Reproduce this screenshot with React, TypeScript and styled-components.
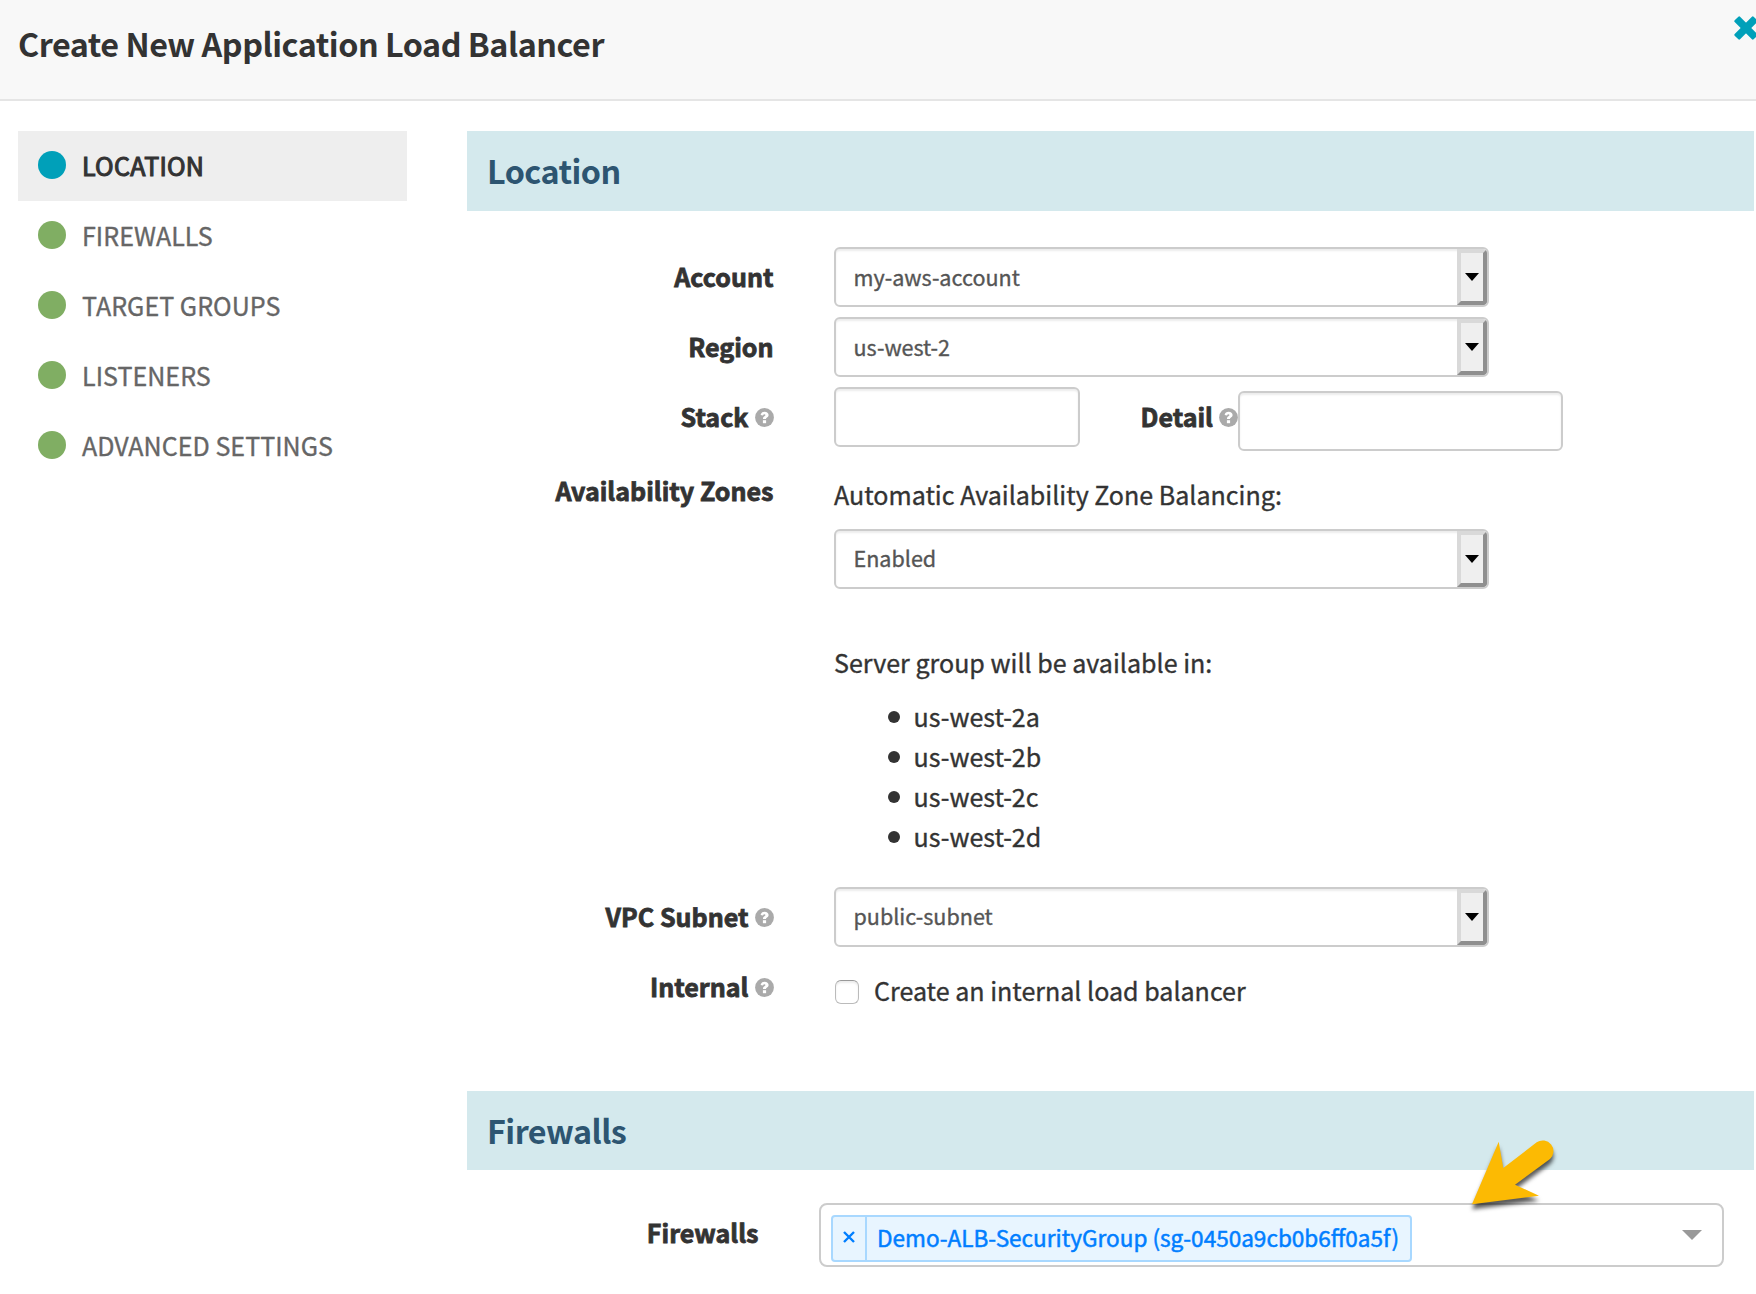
import React from 'react';
import styled, { createGlobalStyle } from 'styled-components';

const GlobalStyle = createGlobalStyle`
  * { box-sizing: border-box; }
  body {
    margin: 0;
    background: #fff;
    color: #333;
    font-family: "Noto Sans CJK SC", "Open Sans", sans-serif;
    font-size: 25.05px;
    -webkit-text-stroke: 0.35px currentColor;
    overflow: hidden;
  }
`;

const Modal = styled.div`
  width: 1756px;
  height: 1294px;
  overflow: hidden;
`;

const Header = styled.header`
  display: flex;
  justify-content: space-between;
  height: 101px;
  padding-left: 18px;
  background: #f8f8f8;
  border-bottom: 2px solid #e5e5e5;
`;

const Title = styled.h1`
  margin: 0;
  padding-top: 20px;
  font-size: 32.3px;
  font-weight: 600;
  letter-spacing: -0.47px;
  line-height: 46px;
  white-space: nowrap;
  -webkit-text-stroke: 0;
`;

const CloseIcon = styled.svg`
  flex: none;
  width: 24px;
  height: 24px;
  margin: 16px -2px 0 0;
  fill: #00a0b9;
`;

const Body = styled.div`
  display: flex;
  padding: 30px 2px 0 18px;
`;

const Nav = styled.nav`
  flex: none;
  width: 389px;
  margin-right: 60px;
`;

const NavItem = styled.div<{ $active?: boolean }>`
  display: flex;
  align-items: center;
  height: 70px;
  padding: 0 0 2px 20px;
  gap: 16px;
  background: ${(p) => (p.$active ? '#eee' : 'transparent')};
  color: ${(p) => (p.$active ? '#333' : '#666')};
  letter-spacing: ${(p) => (p.$active ? 0.25 : 0.03)}px;
  white-space: nowrap;
  -webkit-text-stroke-width: ${(p) => (p.$active ? 1.1 : 0.35)}px;
`;

const Dot = styled.span<{ $active?: boolean }>`
  width: 28px;
  height: 28px;
  border-radius: 50%;
  background: ${(p) => (p.$active ? '#00a0b9' : '#80ae63')};
`;

const Main = styled.main`
  flex: 1;
`;

const SectionHeading = styled.h2<{ $height: number }>`
  height: ${(p) => p.$height}px;
  margin: 0;
  padding-left: 20px;
  background: #d4e9ed;
  color: #2d5571;
  font-size: 32.3px;
  font-weight: 600;
  letter-spacing: -0.52px;
  line-height: 79px;
  -webkit-text-stroke: 0;
`;

const LocationForm = styled.div`
  height: 880px;
  padding-top: 36px;
`;

const Row = styled.div<{ $height?: number }>`
  display: flex;
  height: ${(p) => p.$height ?? 70}px;
`;

const Label = styled.label<{ $width?: number; $gap?: number }>`
  display: flex;
  flex: none;
  align-items: center;
  justify-content: flex-end;
  gap: 6px;
  width: ${(p) => p.$width ?? 306.5}px;
  height: 58px;
  margin-right: ${(p) => p.$gap ?? 60.5}px;
  font-weight: 700;
  white-space: nowrap;
  -webkit-text-stroke-width: 0.8px;
`;

const Field = styled.div`
  flex: 1;
`;

const HelpSvg = styled.svg`
  flex: none;
  width: 19px;
  height: 19px;
  margin-top: 2px;
`;

const SelectBox = styled.div<{ $lineHeight: number }>`
  display: flex;
  justify-content: space-between;
  width: 655px;
  height: 60px;
  padding-left: 17.5px;
  overflow: hidden;
  border: 2px solid #ccc;
  border-radius: 6px;
  box-shadow: inset 0 2px 2px rgba(0, 0, 0, 0.075);
  color: #555;
  font-size: 21.55px;
  line-height: ${(p) => p.$lineHeight}px;
`;

const SelectButton = styled.span`
  display: flex;
  align-items: center;
  justify-content: center;
  width: 30px;
  height: 56px;
  padding-bottom: 1px;
  background: #efefef;
  border: 4px solid;
  border-color: #d9d9d9 #8f8f8f #8f8f8f #d9d9d9;
  border-radius: 0 4px 4px 0;
`;

const TextInput = styled.input<{ $width: number; $top?: number }>`
  width: ${(p) => p.$width}px;
  height: 60px;
  margin: ${(p) => p.$top ?? 0}px 0 0;
  padding: 0 18px;
  border: 2px solid #ccc;
  border-radius: 6px;
  box-shadow: inset 0 2px 2px rgba(0, 0, 0, 0.075);
  outline: none;
`;

const Note = styled.p<{ $top: number }>`
  margin: 0;
  padding-top: ${(p) => p.$top}px;
  line-height: 40px;
`;

const ZoneSelect = styled.div`
  padding: 15px 0 53px;
`;

const ZoneList = styled.ul`
  margin: 14px 0 0;
  padding: 0 0 0 54px;
  list-style: none;
`;

const Zone = styled.li`
  display: flex;
  align-items: center;
  gap: 13.5px;
  height: 40px;
  line-height: 40px;

  &::before {
    content: '';
    width: 12px;
    height: 12px;
    margin-top: 2px;
    border-radius: 50%;
    background: #333;
  }
`;

const CheckLabel = styled.label`
  display: flex;
  align-items: center;
  height: 66px;
  gap: 15px;
`;

const Checkbox = styled.input`
  appearance: none;
  width: 24px;
  height: 24px;
  margin: 3px 0 0 1px;
  border: 1.5px solid #bbb;
  border-top-color: #999;
  border-radius: 6px;
  background: #fff;
  box-shadow: inset 0 2px 2px rgba(0, 0, 0, 0.08);
`;

const FirewallForm = styled.div`
  position: relative;
  display: flex;
  padding-top: 33px;
`;

const MultiSelect = styled.div`
  display: flex;
  justify-content: space-between;
  width: 905px;
  height: 64px;
  padding: 10px 20px 0 10px;
  border: 2px solid #ccc;
  border-radius: 8px;
`;

const Tag = styled.span`
  display: flex;
  height: 47px;
  background: #e8f5ff;
  border: 2px solid #a8d8ff;
  border-radius: 4px;
  color: #007eff;
  white-space: nowrap;
`;

const TagRemove = styled.span`
  display: flex;
  align-items: center;
  justify-content: center;
  width: 34px;
  padding-bottom: 3px;
  border-right: 2px solid #a8d8ff;
`;

const TagText = styled.span`
  padding: 0 11px 0 10px;
  font-size: 22.55px;
  line-height: 41px;
  -webkit-text-stroke-width: 0.5px;
`;

const Caret = styled.span`
  width: 20px;
  height: 10px;
  margin-top: 15px;
  background: #999;
  clip-path: polygon(0 0, 100% 0, 50% 100%);
`;

const Pointer = styled.svg`
  position: absolute;
  top: -36px;
  left: 995px;
  width: 100px;
  height: 90px;
  overflow: visible;
  filter: drop-shadow(0 5px 2px rgba(0, 0, 0, 0.65));
`;

const steps = ['Location', 'Firewalls', 'Target Groups', 'Listeners', 'Advanced Settings'];
const zones = ['us-west-2a', 'us-west-2b', 'us-west-2c', 'us-west-2d'];

function Help() {
  return (
    <HelpSvg viewBox="0 0 19 19">
      <circle cx="9.5" cy="9.5" r="9.4" fill="#aaa" />
      <path d="M5.6 7.1C6 4.9 7.5 3.8 9.6 3.8c2.3 0 4 1.3 4 3.2 0 2.4-2.6 2.5-2.6 4H8c0-2.6 2.4-2.7 2.4-3.9 0-.6-.4-.9-1-.9-.7 0-1.1.4-1.4 1.2z" fill="#fff" />
      <rect x="7.9" y="12.2" width="3.2" height="3" fill="#fff" />
    </HelpSvg>
  );
}

function Select({ value, lineHeight = 56 }: { value: string; lineHeight?: number }) {
  return (
    <SelectBox $lineHeight={lineHeight}>
      {value}
      <SelectButton>
        <svg width="14" height="8" viewBox="0 0 14 8">
          <path d="M0 0h14L7 8z" />
        </svg>
      </SelectButton>
    </SelectBox>
  );
}

export default function App() {
  return (
    <Modal>
      <GlobalStyle />
      <Header>
        <Title>Create New Application Load Balancer</Title>
        <CloseIcon viewBox="0 0 24 24">
          <g transform="rotate(45 12 12)">
            <rect x="-1.4" y="8.2" width="26.8" height="7.6" rx="1.2" />
            <rect x="8.2" y="-1.4" width="7.6" height="26.8" rx="1.2" />
          </g>
        </CloseIcon>
      </Header>
      <Body>
        <Nav>
          {steps.map((step, i) => (
            <NavItem key={step} $active={i === 0}>
              <Dot $active={i === 0} />
              {step.toUpperCase()}
            </NavItem>
          ))}
        </Nav>
        <Main>
          <SectionHeading $height={80}>Location</SectionHeading>
          <LocationForm>
            <Row>
              <Label>Account</Label>
              <Select value="my-aws-account" />
            </Row>
            <Row>
              <Label>Region</Label>
              <Select value="us-west-2" />
            </Row>
            <Row>
              <Label>Stack <Help /></Label>
              <TextInput $width={246} />
              <Label $width={158} $gap={0}>Detail <Help /></Label>
              <TextInput $width={325} $top={4} />
            </Row>
            <Row $height={430}>
              <Label as="div">
                <Note $top={8}>Availability Zones</Note>
              </Label>
              <Field>
                <Note $top={17}>Automatic Availability Zone Balancing:</Note>
                <ZoneSelect>
                  <Select value="Enabled" lineHeight={54} />
                </ZoneSelect>
                <Note $top={0}>Server group will be available in:</Note>
                <ZoneList>
                  {zones.map((z) => (
                    <Zone key={z}>{z}</Zone>
                  ))}
                </ZoneList>
              </Field>
            </Row>
            <Row>
              <Label>VPC Subnet <Help /></Label>
              <Select value="public-subnet" lineHeight={54} />
            </Row>
            <Row>
              <Label>Internal <Help /></Label>
              <CheckLabel>
                <Checkbox type="checkbox" />
                Create an internal load balancer
              </CheckLabel>
            </Row>
          </LocationForm>
          <SectionHeading $height={79}>Firewalls</SectionHeading>
          <FirewallForm>
            <Label $width={291.5}>Firewalls</Label>
            <MultiSelect>
              <Tag>
                <TagRemove>
                  <svg width="12" height="12" viewBox="0 0 12 12">
                    <path d="M1 1l10 10M11 1L1 11" stroke="#007eff" strokeWidth="2.4" />
                  </svg>
                </TagRemove>
                <TagText>Demo-ALB-SecurityGroup (sg-0450a9cb0b6ff0a5f)</TagText>
              </Tag>
              <Caret />
            </MultiSelect>
            <Pointer viewBox="0 0 100 90">
              <path d="M10 70.300L36.700 7.700L41.300 34L74.700 8.300A10.700 10.700 0 0 1 88 25L53 50.700L77 61.700Z" fill="#fcba03" />
            </Pointer>
          </FirewallForm>
        </Main>
      </Body>
    </Modal>
  );
}
